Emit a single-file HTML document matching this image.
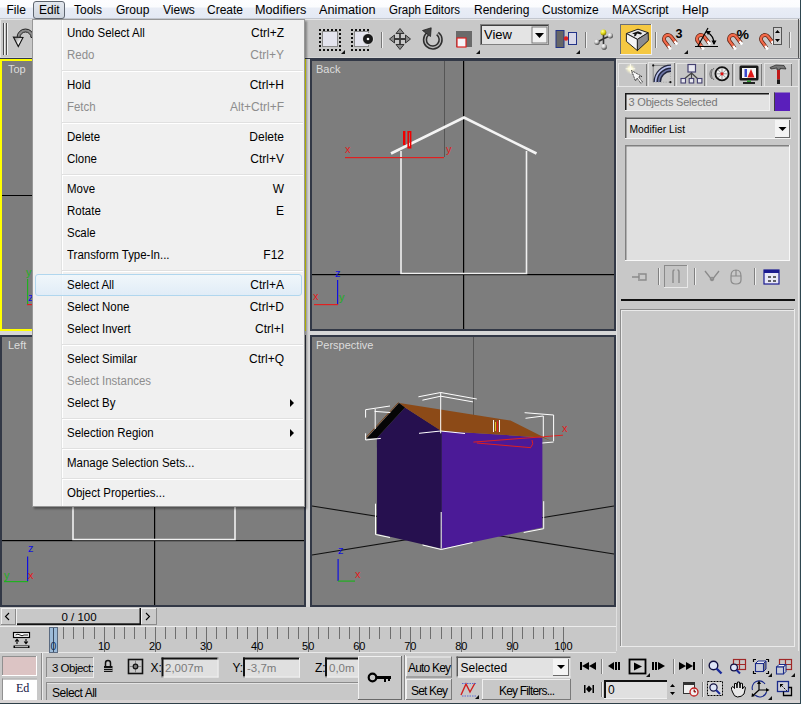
<!DOCTYPE html>
<html><head><meta charset="utf-8">
<style>
*{box-sizing:border-box}
html,body{margin:0;padding:0;width:801px;height:704px;overflow:hidden;background:#c8c8c8;font-family:"Liberation Sans",sans-serif;font-size:12px;color:#000}
.a{position:absolute}
#menubar{left:0;top:0;width:801px;height:19px;background:linear-gradient(#fdfdff 0,#fbfcfe 7px,#e9edf6 8px,#e4e9f4 18px);border-bottom:1px solid #c3c7cf}
.mi{position:absolute;top:3px;white-space:nowrap;color:#000;line-height:14px}
#toolbar{left:0;top:19px;width:801px;height:39px;background:#c8c8c8}
.vp{position:absolute;background:#7d7d7d;border:2px solid #303848;overflow:hidden}
.vlabel{position:absolute;color:#e6e6e6;font-size:11px;white-space:nowrap}
#cmd{left:616px;top:58px;width:185px;height:550px;background:#c8c8c8}
.menu{left:32px;top:19px;width:273px;height:488px;background:#f0f0f0;border:1px solid #979797;box-shadow:2px 2px 2px rgba(0,0,0,.35)}
.row{position:absolute;left:0;width:271px;height:22px}
.row .t{position:absolute;left:34px;top:4px;white-space:nowrap;transform:scaleX(.955);transform-origin:0 0}
.row .k{position:absolute;right:20px;top:4px;white-space:nowrap}
.row.dis{color:#8d8d8d}
.sep{position:absolute;left:29px;width:241px;height:2px;border-top:1px solid #e0e0e0;border-bottom:1px solid #fff}
svg{position:absolute;overflow:visible}
</style></head><body>

<!-- MENUBAR -->
<div id="menubar" class="a">
  <div class="a" style="left:33px;top:1px;width:32px;height:18px;border:1px solid #5f6670;border-radius:3px;background:linear-gradient(#e4e8ef,#cfd5de)"></div>
  <span class="mi" style="left:6.5px">File</span>
  <span class="mi" style="left:39px">Edit</span>
  <span class="mi" style="left:74px">Tools</span>
  <span class="mi" style="left:116px">Group</span>
  <span class="mi" style="left:163px">Views</span>
  <span class="mi" style="left:207px">Create</span>
  <span class="mi" style="left:255px;transform:scaleX(1.055);transform-origin:0 0">Modifiers</span>
  <span class="mi" style="left:319px;transform:scaleX(1.06);transform-origin:0 0">Animation</span>
  <span class="mi" style="left:388.5px;transform:scaleX(.96);transform-origin:0 0">Graph Editors</span>
  <span class="mi" style="left:474px">Rendering</span>
  <span class="mi" style="left:542px">Customize</span>
  <span class="mi" style="left:612px">MAXScript</span>
  <span class="mi" style="left:681.5px;transform:scaleX(1.08);transform-origin:0 0">Help</span>
</div>

<!-- TOOLBAR -->
<div id="toolbar" class="a">
<svg class="a" style="left:0;top:0" width="801" height="39" viewBox="0 19 801 39">
 <rect x="0" y="19" width="801" height="1" fill="#e6e6e6"/>
 <rect x="0" y="19" width="1" height="39" fill="#e6e6e6"/>
 <rect x="3" y="23" width="1" height="32" fill="#4a4a4a"/><rect x="4" y="23" width="1" height="32" fill="#f2f2f2"/>
 <rect x="6" y="23" width="1" height="32" fill="#4a4a4a"/><rect x="7" y="23" width="1" height="32" fill="#f2f2f2"/>
 <!-- undo -->
 <defs><linearGradient id="ug" x1="0" y1="0" x2="1" y2="1"><stop offset="0" stop-color="#777"/><stop offset=".6" stop-color="#f4f4f4"/><stop offset="1" stop-color="#999"/></linearGradient></defs>
 <path d="M17 37.5 A8.5 8.5 0 0 1 34 37.5 L31 37.5 A5.5 5.5 0 0 0 20 37.5Z" fill="#8a8a8a" stroke="#222" stroke-width="1"/>
 <path d="M13.4 37 L18.3 46.6 L23 37.5Z" fill="url(#ug)" stroke="#111" stroke-width="1.1"/>
 <!-- select region -->
 <g fill="#111">
  <rect x="319" y="29" width="2" height="2"/><rect x="323" y="29" width="2" height="2"/><rect x="327" y="29" width="2" height="2"/><rect x="331" y="29" width="2" height="2"/><rect x="335" y="29" width="2" height="2"/><rect x="339" y="29" width="2" height="2"/>
  <rect x="319" y="49" width="2" height="2"/><rect x="323" y="49" width="2" height="2"/><rect x="327" y="49" width="2" height="2"/><rect x="331" y="49" width="2" height="2"/><rect x="335" y="49" width="2" height="2"/><rect x="339" y="49" width="2" height="2"/>
  <rect x="319" y="33" width="2" height="2"/><rect x="319" y="37" width="2" height="2"/><rect x="319" y="41" width="2" height="2"/><rect x="319" y="45" width="2" height="2"/>
  <rect x="339" y="33" width="2" height="2"/><rect x="339" y="37" width="2" height="2"/><rect x="339" y="41" width="2" height="2"/><rect x="339" y="45" width="2" height="2"/>
 </g>
 <rect x="322.5" y="31.5" width="15" height="15" fill="#e4e4ee" stroke="#8a8a8a"/>
 <path d="M345 50 L345 54 L341 54Z" fill="#111"/>
 <g fill="#111">
  <rect x="351" y="29" width="2" height="2"/><rect x="355" y="29" width="2" height="2"/><rect x="359" y="29" width="2" height="2"/><rect x="363" y="29" width="2" height="2"/><rect x="367" y="29" width="2" height="2"/>
  <rect x="351" y="49" width="2" height="2"/><rect x="355" y="49" width="2" height="2"/><rect x="359" y="49" width="2" height="2"/><rect x="363" y="49" width="2" height="2"/><rect x="367" y="49" width="2" height="2"/>
  <rect x="351" y="33" width="2" height="2"/><rect x="351" y="37" width="2" height="2"/><rect x="351" y="41" width="2" height="2"/><rect x="351" y="45" width="2" height="2"/>
 </g>
 <rect x="354.5" y="31.5" width="14" height="15" fill="#e4e4ee" stroke="#8a8a8a"/>
 <circle cx="368" cy="39" r="5.5" fill="#1a1a1a" stroke="#fff" stroke-width="0.8"/>
 <circle cx="368" cy="39" r="1.3" fill="#fff"/>
 <rect x="381" y="32" width="1" height="16" fill="#777"/><rect x="382" y="32" width="1" height="16" fill="#f0f0f0"/>
 <!-- move -->
 <path d="M400 31 L400 47 M392 39 L408 39" stroke="#3a3a3a" stroke-width="1.8"/>
 <g fill="#8a8a8a" stroke="#333" stroke-width="1">
  <path d="M400 28.5 L404 33.5 L396 33.5Z"/><path d="M400 49.5 L404 44.5 L396 44.5Z"/>
  <path d="M389.5 39 L394.5 35 L394.5 43Z"/><path d="M410.5 39 L405.5 35 L405.5 43Z"/>
 </g>
 <!-- rotate -->
 <path d="M427.5 34 A7.8 7.8 0 1 0 437.5 33.5" fill="none" stroke="#2e2e2e" stroke-width="4.4"/>
 <path d="M427.5 34 A7.8 7.8 0 1 0 437.5 33.5" fill="none" stroke="#b8b8b8" stroke-width="1.4"/>
 <path d="M422.5 30.5 L431.2 27.8 L430.5 36.5Z" fill="#444" stroke="#222" stroke-width=".8"/>
 <!-- scale -->
 <rect x="456" y="31" width="16" height="16" fill="#6a6a6a"/>
 <rect x="457" y="38" width="9" height="9" fill="#f4f4f8" stroke="#e02020" stroke-width="1.2"/>
 <path d="M480 50 L480 54 L476 54Z" fill="#111"/>
 <!-- view dropdown -->
 <rect x="480.5" y="24.5" width="68" height="20" fill="#e4e4e4" stroke="#808080"/>
 <rect x="481" y="25" width="67" height="1" fill="#404040"/><rect x="481" y="25" width="1" height="19" fill="#404040"/>
 <rect x="532" y="27" width="15" height="16" fill="#f2f2f2" stroke="#7a7a7a" stroke-width="1"/>
 <path d="M535 33 L544 33 L539.5 38Z" fill="#000"/>
 <text x="484" y="39" font-family="Liberation Sans" font-size="13" fill="#000">View</text>
  <!-- mirror -->
 <rect x="556" y="30.5" width="8" height="17" fill="#666" stroke="#223388"/>
 <rect x="568.5" y="32.5" width="8" height="12" fill="#d8d8e8" stroke="#223388"/>
 <circle cx="566" cy="38.5" r="2.2" fill="#e02020"/>
 <path d="M580 50 L580 54 L576 54Z" fill="#111"/>
 <rect x="585" y="32" width="1" height="16" fill="#777"/><rect x="586" y="32" width="1" height="16" fill="#f0f0f0"/>
 <!-- pivot -->
 <defs>
  <radialGradient id="sph" cx=".35" cy=".3" r=".75"><stop offset="0" stop-color="#fff"/><stop offset=".45" stop-color="#c8c8c8"/><stop offset="1" stop-color="#3a3a3a"/></radialGradient>
  <radialGradient id="sphy" cx=".35" cy=".3" r=".75"><stop offset="0" stop-color="#ffffa0"/><stop offset=".5" stop-color="#e8e020"/><stop offset="1" stop-color="#807800"/></radialGradient>
 </defs>
 <path d="M603.5 33 L603.5 44 M597 42.2 L603.5 38.7 L610.3 35.8" fill="none" stroke="#333" stroke-width="1.6"/>
 <circle cx="603.4" cy="32.4" r="2.9" fill="url(#sphy)"/>
 <circle cx="610.3" cy="35.8" r="2.7" fill="url(#sph)"/>
 <circle cx="597" cy="42.2" r="2.7" fill="url(#sph)"/>
 <circle cx="604.1" cy="46.9" r="2.8" fill="url(#sph)"/>
 <!-- yellow button -->
 <rect x="620" y="24" width="32" height="31" fill="#f5c842"/>
 <rect x="620" y="24" width="32" height="1" fill="#6a6e78"/><rect x="620" y="24" width="1" height="31" fill="#6a6e78"/>
 <rect x="651" y="24" width="1" height="31" fill="#f0f0f0"/><rect x="620" y="54" width="32" height="1" fill="#f0f0f0"/>
 <path d="M626.4 33.5 L638 29.2 L648.2 32.7 L637.4 39.4Z" fill="#e8e8ea" stroke="#222" stroke-width="1"/>
 <path d="M626.4 33.5 L637.4 39.4 L637.4 50.6 L626.4 41.4Z" fill="#f4f4f6" stroke="#222" stroke-width="1"/>
 <path d="M637.4 39.4 L648.2 32.7 L648.4 40.4 L637.4 50.6Z" fill="#8c8c90" stroke="#222" stroke-width="1"/>
 <path d="M632 33.5 L638 31.2 L642 33 L641 34.5 L637 33.5 L636 35.8 L634 36.5 L634.5 34.2Z" fill="#111"/>
 <rect x="655" y="32" width="1" height="16" fill="#777"/><rect x="656" y="32" width="1" height="16" fill="#f0f0f0"/>
 <!-- magnets -->
 <g id="mag">
  <path d="M669.6 47.8 L664.8 41.4 A4 4 0 0 1 671.2 36.6 L676 43" fill="none" stroke="#5a2010" stroke-width="3.8"/>
  <path d="M669.6 47.8 L664.8 41.4 A4 4 0 0 1 671.2 36.6 L676 43" fill="none" stroke="#f26a4a" stroke-width="2.4"/>
  <path d="M668.2 46 L670.8 49.4 M674.6 41.2 L677.2 44.6" stroke="#fff" stroke-width="2.4"/>
 </g>
 <text x="675.5" y="37.5" font-family="Liberation Sans" font-weight="bold" font-size="12.5" fill="#000">3</text>
 <path d="M688 50 L688 54 L684 54Z" fill="#111"/>
 <use href="#mag" x="33"/>
 <path d="M695 46.5 L718 46.5 M698 46 L708 28 M706.5 32 A13 13 0 0 1 714 44" fill="none" stroke="#000" stroke-width="1.2"/>
 <path d="M711 31 L706 31 L708 35Z M714 45 L711.5 40.5 L716.5 40.5Z" fill="#000"/>
 <use href="#mag" x="65"/>
 <text x="736.5" y="38.5" font-family="Liberation Sans" font-weight="bold" font-size="13.5" fill="#000" textLength="12.5" lengthAdjust="spacingAndGlyphs">%</text>
 <use href="#mag" x="97"/>
 <rect x="773.5" y="27.5" width="8" height="17" fill="#d0d0d0" stroke="#555"/>
 <path d="M775 33 L780 33 L777.5 30Z M775 39 L780 39 L777.5 42Z" fill="#000"/>
 <rect x="789" y="32" width="1" height="16" fill="#777"/><rect x="790" y="32" width="1" height="16" fill="#f0f0f0"/>
 <rect x="0" y="57" width="801" height="1" fill="#d4d4d4"/>
 <rect x="798" y="19" width="1" height="39" fill="#555"/>
</svg>
</div>

<!-- VIEWPORTS -->
<svg class="a" style="left:0;top:58px" width="616" height="550" viewBox="0 58 616 550">
 <rect x="0" y="58" width="616" height="550" fill="#c8c8c8"/>
 <rect x="0" y="58" width="616" height="1" fill="#323846"/>
 <rect x="306" y="59" width="4" height="548" fill="#d6d6d6"/>
 <rect x="0" y="331" width="616" height="4" fill="#d6d6d6"/>
 <!-- Top -->
 <rect x="0" y="59" width="306" height="272" fill="#ffff00"/>
 <rect x="2" y="61" width="302" height="268" fill="#7d7d7d"/>
 <rect x="2" y="195" width="302" height="1" fill="#000"/>
 <text x="8" y="73" font-family="Liberation Sans" font-size="11" fill="#dcdcdc">Top</text>
 <rect x="27" y="279" width="1.2" height="25" fill="#20b020"/>
 <rect x="27" y="304" width="8" height="1.2" fill="#e02020"/>
 <text x="26" y="276" font-family="Liberation Sans" font-size="11" fill="#20b020">y</text>
 <text x="28" y="301" font-family="Liberation Sans" font-size="11" fill="#1010e0">z</text>
 <!-- Back -->
 <rect x="310" y="59" width="306" height="272" fill="#323846"/>
 <rect x="312" y="61" width="302" height="268" fill="#7d7d7d"/>
 <text x="316" y="73" font-family="Liberation Sans" font-size="11" fill="#dcdcdc">Back</text>
 <rect x="463" y="61" width="1.2" height="268" fill="#000"/>
 <rect x="312" y="274" width="302" height="1.2" fill="#000"/>
 <rect x="444" y="61" width="1" height="96" fill="#555"/>
 <path d="M401 151 L401 273.5 L526.5 273.5 L526.5 151" fill="none" stroke="#f0f0f0" stroke-width="1.6"/>
 <path d="M391 153.5 L464 117.5 L536.5 153.5" fill="none" stroke="#f4f4f4" stroke-width="2.6"/>
 <rect x="403" y="131" width="2.4" height="14" fill="#f00000"/><path d="M408.2 131.8 L410.6 131.8 L410.6 147.6 L408.2 147.6Z" fill="none" stroke="#f00000" stroke-width="1.6"/>
 <rect x="345" y="157" width="99" height="1.2" fill="#e02020"/>
 <text x="345" y="153" font-family="Liberation Sans" font-size="11" fill="#e02020">x</text>
 <text x="446" y="153" font-family="Liberation Sans" font-size="11" fill="#e02020">y</text>
 
 <rect x="337" y="280" width="1.2" height="24.5" fill="#1010e0"/>
 <rect x="314" y="304" width="24" height="1.2" fill="#e02020"/>
 <text x="335" y="277" font-family="Liberation Sans" font-size="11" fill="#1010e0">z</text>
 <text x="313" y="300" font-family="Liberation Sans" font-size="11" fill="#e02020">x</text>
 <text x="339" y="301" font-family="Liberation Sans" font-size="11" fill="#20b020">y</text>
 <!-- Left -->
 <rect x="0" y="335" width="306" height="272" fill="#323846"/>
 <rect x="2" y="337" width="302" height="268" fill="#7d7d7d"/>
 <text x="8" y="349" font-family="Liberation Sans" font-size="11" fill="#dcdcdc">Left</text>
 <rect x="154" y="337" width="1.2" height="268" fill="#000"/>
 <rect x="2" y="540" width="302" height="1.2" fill="#000"/>
 <path d="M73 400 L73 539.5 L235 539.5 L235 400" fill="none" stroke="#f0f0f0" stroke-width="1.6"/>
 <rect x="27" y="556.5" width="1.2" height="25" fill="#1010e0"/>
 <rect x="4" y="581" width="24" height="1.2" fill="#20b020"/>
 <text x="28" y="552" font-family="Liberation Sans" font-size="11" fill="#1010e0">z</text>
 <text x="4" y="579" font-family="Liberation Sans" font-size="11" fill="#20b020">y</text>
 <text x="28" y="579" font-family="Liberation Sans" font-size="11" fill="#e02020">x</text>
 <!-- Perspective -->
 <rect x="310" y="335" width="306" height="272" fill="#323846"/>
 <rect x="312" y="337" width="302" height="268" fill="#7d7d7d"/>
 <text x="316" y="349" font-family="Liberation Sans" font-size="11" fill="#dcdcdc">Perspective</text>
 <path d="M312 506 L614 554 M312 555 L614 506" stroke="#111" stroke-width="1.1"/>
 <rect x="473" y="337" width="1" height="105" fill="#555"/>
 <path d="M376.9 438 L405 407.5 L441.9 431 L441.9 548.7 L377 533.7Z" fill="#26104f"/>
 <path d="M441.9 431 L542.4 437.4 L542.3 527.5 L441.9 548.7Z" fill="#4b1a97"/>
 <path d="M399.3 403 L510.5 420.6 L551.7 441.2 L542.4 437.4 L441.2 431 L405 407.5Z" fill="#8c4a17"/>
 <path d="M366.5 438.6 L399 403 L405 407.5 L376.9 438Z" fill="#050505"/>
 <path d="M366 437.5 L398.5 402.5" stroke="#7a4216" stroke-width="1"/>
 <path d="M473.4 442.1 L563 435.2 M476.8 443 L531.1 447.7 M532 440 Q534 444 531 447" fill="none" stroke="#e02020" stroke-width="1"/>
 <text x="562" y="431.5" font-family="Liberation Sans" font-size="11" fill="#e02020">x</text>
 <path d="M493.5 420 L493.5 432 M499.5 420 L499.5 432" stroke="#f4f4f4" stroke-width="1"/>
 <path d="M495.5 422 L495.5 431" stroke="#e0c020" stroke-width="1"/><path d="M497.5 421 L497.5 432" stroke="#e02020" stroke-width="1"/>
 <g fill="none" stroke="#fff" stroke-width="1">
  <path d="M365.6 417.6 L365.6 409.7 L390 406 M374.6 411.4 L390.3 412.5 M375.2 409 L375.2 429 M365.6 433.3 L365.6 440 L380.8 438.4"/>
  <path d="M418.4 396.8 L440.7 392.5 L476.8 399 M422.4 400.2 L440.7 396.2 L473 401.9 M440.7 392.3 L440.7 433.3 M419 433.3 L440.7 431 L465 433.5"/>
  <path d="M524.6 412.7 L553.6 415 L553.6 441.2 M525.5 418.3 L543.3 416 L543.3 436.5 M542.4 443 L553.6 442"/>
  <path d="M375.5 503.7 L375.5 534.5 L390 537.5 M441.2 512 L441.2 548.7 M422.5 545 L441.2 549.5 L472.5 542.5 M543.7 501.2 L543.7 528.7 L523.7 532.5"/>
 </g>
 <rect x="337.5" y="559" width="1.2" height="22" fill="#1010e0"/>
 <rect x="338" y="580.5" width="17" height="1.2" fill="#20b020"/>
 <text x="338" y="554" font-family="Liberation Sans" font-size="11" fill="#1010e0">z</text>
 <text x="355" y="578" font-family="Liberation Sans" font-size="11" fill="#e02020">x</text>
</svg>

<!-- COMMAND PANEL -->
<svg class="a" style="left:616px;top:58px" width="185" height="594" viewBox="616 58 185 594">
 <rect x="616" y="58" width="185" height="594" fill="#c8c8c8"/>
 <rect x="616" y="58" width="185" height="1" fill="#7c7e84"/>
 <rect x="616" y="59" width="185" height="1" fill="#e0e0e0"/>
 <rect x="616" y="59" width="1" height="593" fill="#e0e0e0"/>
 <rect x="798" y="59" width="1" height="592" fill="#e6e6e6"/>
 
 <rect x="618" y="63" width="29" height="23" fill="#c6c6c6"/><rect x="618" y="63" width="29" height="1" fill="#e4e4e4"/><rect x="618" y="63" width="1" height="23" fill="#e4e4e4"/><rect x="646" y="64" width="1" height="22" fill="#7a7a7a"/>
<rect x="648" y="62" width="27" height="24" fill="#cacaca"/><rect x="648" y="62" width="27" height="1" fill="#e4e4e4"/><rect x="648" y="62" width="1" height="24" fill="#e4e4e4"/><rect x="674" y="63" width="1" height="23" fill="#7a7a7a"/>
<rect x="676" y="63" width="29" height="23" fill="#c6c6c6"/><rect x="676" y="63" width="29" height="1" fill="#e4e4e4"/><rect x="676" y="63" width="1" height="23" fill="#e4e4e4"/><rect x="704" y="64" width="1" height="22" fill="#7a7a7a"/>
<rect x="706" y="63" width="27" height="23" fill="#c6c6c6"/><rect x="706" y="63" width="27" height="1" fill="#e4e4e4"/><rect x="706" y="63" width="1" height="23" fill="#e4e4e4"/><rect x="732" y="64" width="1" height="22" fill="#7a7a7a"/>
<rect x="734" y="63" width="28" height="23" fill="#c6c6c6"/><rect x="734" y="63" width="28" height="1" fill="#e4e4e4"/><rect x="734" y="63" width="1" height="23" fill="#e4e4e4"/><rect x="761" y="64" width="1" height="22" fill="#7a7a7a"/>
<rect x="764" y="63" width="28" height="23" fill="#c6c6c6"/><rect x="764" y="63" width="28" height="1" fill="#e4e4e4"/><rect x="764" y="63" width="1" height="23" fill="#e4e4e4"/><rect x="791" y="64" width="1" height="22" fill="#7a7a7a"/>

 <rect x="616" y="86" width="183" height="1" fill="#e6e6e6"/>
 <!-- tab icons -->
 <defs><radialGradient id="glow"><stop offset="0" stop-color="#ffffff"/><stop offset=".35" stop-color="#fbf8d0"/><stop offset="1" stop-color="#c8c8c8" stop-opacity="0"/></radialGradient></defs>
 <circle cx="630.4" cy="68.8" r="6" fill="url(#glow)"/>
 <path d="M630.4 64 L630.4 73.5 M625.6 68.8 L635.2 68.8" stroke="#fffef0" stroke-width=".9"/>
 <path d="M631.5 70.5 L635.5 81 L637 78 L641 83.5 L642.5 82 L638.5 76.8 L642 76.5Z" fill="#f8f8f8" stroke="#333" stroke-width="1" stroke-dasharray="1.2 .6"/>
 <path d="M653.2 82.2 L653.2 65.4 L670.4 65.4" fill="none" stroke="#6a6a6a" stroke-width=".7"/>
 <path d="M653.2 82.2 L670.4 82.2 L670.4 65.4" fill="none" stroke="#8a8a8a" stroke-width=".6" stroke-dasharray="1 1.5"/>
 <circle cx="653.2" cy="65.4" r="1.1" fill="#111"/><circle cx="670.4" cy="82.2" r="1.1" fill="#111"/>
 <path d="M657.25 82 A13.75 13.75 0 0 1 671 68.25" fill="none" stroke="#23273f" stroke-width="7.5"/>
 <path d="M655.6 82 A15.4 15.4 0 0 1 671 66.6" fill="none" stroke="#b8c0ec" stroke-width="1.6"/>
 <path d="M658.8 82 A12.2 12.2 0 0 1 671 69.8" fill="none" stroke="#6f78a8" stroke-width="1.6"/>
 <path d="M691.5 72 L691.5 80 M691.5 73 L683 80 M691.5 73 L699 80" stroke="#444" stroke-width="1.2"/>
 <rect x="688" y="64.5" width="7.5" height="7.5" fill="#e8e8f0" stroke="#444070" stroke-width="1.2"/>
 <rect x="681" y="78.5" width="4.5" height="4.5" fill="#e8e8f0" stroke="#444070" stroke-width="1.1"/>
 <rect x="689.2" y="78.5" width="4.5" height="4.5" fill="#e8e8f0" stroke="#444070" stroke-width="1.1"/>
 <rect x="697.4" y="78.5" width="4.5" height="4.5" fill="#e8e8f0" stroke="#444070" stroke-width="1.1"/>
 <path d="M714 68 A8 8 0 0 0 714 80 M712 69 A7 7 0 0 0 712 79" fill="none" stroke="#555" stroke-width=".8"/>
 <circle cx="722" cy="73.8" r="6.6" fill="#eeeeee" stroke="#111" stroke-width="1.8"/>
 <path d="M722 68 L722 79.5 M716.3 73.8 L727.7 73.8 M718 69.8 L726 77.8 M726 69.8 L718 77.8" stroke="#888" stroke-width=".8"/>
 <circle cx="722" cy="73.8" r="1.6" fill="#e01010"/>
 <rect x="739.5" y="65.5" width="19" height="15" fill="#1a1a1a" rx="1.5"/>
 <rect x="742" y="68" width="14" height="10" fill="#f4f4f4"/>
 <rect x="744.5" y="69" width="2.5" height="8" fill="#3a4ad0"/>
 <path d="M747.5 77.5 L751 69 L754.5 77.5Z" fill="#e01818"/>
 <rect x="747" y="80.5" width="4" height="2" fill="#30a030"/>
 <rect x="743" y="82" width="12" height="2" fill="#222"/>
 <path d="M770 67.5 L776 65 L784 65.5 L786 69 L780 68.5 L780 70 L777 70 L777 68 L771 69Z" fill="#777" stroke="#222" stroke-width=".7"/>
 <rect x="777" y="70" width="3" height="9.5" fill="#c01818"/>
 <rect x="777" y="79.5" width="3" height="4.5" fill="#1a1a1a"/>
 <!-- object name field -->
 <rect x="625" y="93" width="145" height="18" fill="#e2e2e2"/>
 <rect x="625" y="93" width="145" height="1.5" fill="#1a1a1a"/><rect x="625" y="93" width="1.5" height="18" fill="#1a1a1a"/>
 <rect x="625" y="110" width="145" height="1" fill="#f0f0f0"/><rect x="769" y="93" width="1" height="18" fill="#f0f0f0"/>
 <text x="628.5" y="106" font-family="Liberation Sans" font-size="11" fill="#777" textLength="89" lengthAdjust="spacing">3 Objects Selected</text>
 <rect x="774" y="92.5" width="16" height="18.5" fill="#5a1fbb"/>
 <rect x="774" y="92.5" width="1" height="18.5" fill="#404040"/>
 <!-- modifier list -->
 <rect x="625" y="117.5" width="166" height="21" fill="#e0e0e0"/>
 <rect x="625" y="117.5" width="166" height="1.5" fill="#5a5a5a"/><rect x="625" y="117.5" width="1.5" height="21" fill="#5a5a5a"/>
 <rect x="625" y="138" width="166" height="1" fill="#f4f4f4"/>
 <rect x="775" y="120" width="15" height="18" fill="#f4f4f4"/>
 <rect x="789" y="120" width="1" height="18" fill="#6a6a6a"/><rect x="775" y="137" width="15" height="1" fill="#6a6a6a"/>
 <path d="M778.5 127 L786.5 127 L782.5 131Z" fill="#000"/>
 <text x="629.5" y="132.7" font-family="Liberation Sans" font-size="11" fill="#000" textLength="55.5" lengthAdjust="spacingAndGlyphs">Modifier List</text>
 <!-- stack list -->
 <rect x="625" y="145" width="165" height="116" fill="#e0e0e0"/>
 <rect x="625" y="145" width="165" height="1.5" fill="#808080"/><rect x="625" y="145" width="1.5" height="116" fill="#808080"/>
 <rect x="625" y="260" width="165" height="1" fill="#f8f8f8"/><rect x="789" y="145" width="1" height="116" fill="#f8f8f8"/>
 <!-- stack icons -->
 <path d="M632 277 L639 277 M639 273 L639 281 M640 274 L646 274 L646 280 L640 280" fill="none" stroke="#8a8a8a" stroke-width="1.4"/>
 <rect x="658" y="268" width="1" height="17" fill="#808080"/><rect x="659" y="268" width="1" height="17" fill="#eeeeee"/>
 <rect x="664" y="265" width="24" height="23" fill="#c4c4c4"/>
 <rect x="664" y="265" width="24" height="1" fill="#8a8a8a"/><rect x="664" y="265" width="1" height="23" fill="#8a8a8a"/>
 <rect x="664" y="287" width="24" height="1" fill="#e8e8e8"/><rect x="687" y="265" width="1" height="23" fill="#e8e8e8"/>
 <path d="M673 283 L673 272 Q673 270 674.5 270 M679 283 L679 272 Q679 270 677.5 270" fill="none" stroke="#8a8a8a" stroke-width="1.4"/>
 <rect x="694" y="268" width="1" height="17" fill="#808080"/><rect x="695" y="268" width="1" height="17" fill="#eeeeee"/>
 <path d="M705 271 L712 280 L719 271" fill="none" stroke="#8a8a8a" stroke-width="1.3"/>
 <circle cx="712" cy="279" r="1.8" fill="none" stroke="#8a8a8a"/>
 <path d="M731 276 Q731 270 736 270 Q741 270 741 276 L741 280 Q741 284 736 284 Q731 284 731 280Z M731 276 L741 276 M736 270 L736 276" fill="none" stroke="#8a8a8a" stroke-width="1.2"/>
 <rect x="754" y="268" width="1" height="17" fill="#808080"/><rect x="755" y="268" width="1" height="17" fill="#eeeeee"/>
 <rect x="764" y="270" width="15" height="14" fill="#e8e8f8" stroke="#1a1a90" stroke-width="1.2"/>
 <rect x="764" y="270" width="15" height="3" fill="#1a1a90"/>
 <path d="M768 277 L771 277 M773 277 L776 277 M768 281 L771 281 M773 281 L776 281" stroke="#333" stroke-width="1.4"/>
 <rect x="621" y="299" width="174" height="2" fill="#111"/>
 <!-- rollout area -->
 <rect x="620" y="309" width="175" height="337" fill="#c8c8c8"/>
 <rect x="620" y="309" width="175" height="1" fill="#8c8c8c"/><rect x="620" y="309" width="1" height="337" fill="#8c8c8c"/>
 <rect x="621" y="310" width="173" height="1" fill="#eaeaea"/><rect x="621" y="310" width="1" height="336" fill="#eaeaea"/>
 <rect x="794" y="309" width="1" height="337" fill="#eaeaea"/>
 <rect x="620" y="646" width="175" height="1" fill="#eaeaea"/>
 <rect x="617" y="652" width="184" height="1" fill="#767676"/>
</svg>

<!-- BOTTOM -->
<svg class="a" style="left:0;top:607px" width="801" height="97" viewBox="0 607 801 97">
 <rect x="0" y="607" width="616" height="97" fill="#c8c8c8"/>
 <rect x="616" y="651" width="185" height="53" fill="#c8c8c8"/>
 <!-- time slider -->
 
 <rect x="1" y="608" width="15" height="17" fill="#cacaca"/>
 <rect x="1" y="608" width="15" height="1" fill="#f0f0f0"/><rect x="1" y="608" width="1" height="17" fill="#f0f0f0"/>
 <rect x="15" y="609" width="1" height="16" fill="#8a8a8a"/><rect x="1" y="624" width="15" height="1" fill="#8a8a8a"/>
 <path d="M9 613 L5.5 616.5 L9 620" fill="none" stroke="#000" stroke-width="1.1"/>
 <rect x="16" y="608" width="125" height="17" fill="#c8c8c8"/>
 <rect x="16" y="608" width="125" height="1" fill="#f0f0f0"/><rect x="16" y="608" width="1" height="17" fill="#f0f0f0"/>
 <rect x="139.5" y="608" width="1.8" height="17" fill="#111"/><rect x="17" y="623.3" width="124" height="1.8" fill="#111"/>
 <text x="79" y="621" text-anchor="middle" font-family="Liberation Sans" font-size="11.5" fill="#000">0 / 100</text>
 <rect x="141" y="608" width="15" height="17" fill="#cacaca"/>
 <rect x="141" y="608" width="15" height="1" fill="#f0f0f0"/><rect x="141" y="608" width="1" height="17" fill="#f0f0f0"/>
 <rect x="156" y="608" width="1" height="17" fill="#8a8a8a"/><rect x="141" y="624" width="15" height="1" fill="#8a8a8a"/>
 <path d="M146 613 L149.5 616.5 L146 620" fill="none" stroke="#000" stroke-width="1.1"/>
 <!-- track bar -->
 <rect x="0" y="626" width="616" height="1" fill="#ececec"/>
 <rect x="0" y="652" width="616" height="1" fill="#e8e8e8"/>
 <rect x="13.5" y="632.5" width="16" height="5" fill="#fff" stroke="#000" stroke-width="1.2"/>
 <path d="M15.5 635 Q18 633.5 20 635 Q22 636.5 24 635 L28 635" fill="none" stroke="#000" stroke-width=".9"/>
 <path d="M17 644 L17 639.5 M15.2 641.5 L17 639.3 L18.8 641.5 M26 639 L26 643.5 M24.2 641.5 L26 643.7 L27.8 641.5" fill="none" stroke="#000" stroke-width="1.1"/>
 <rect x="13.5" y="645.5" width="16" height="2.5" fill="#000"/>
 <rect x="15" y="646.3" width="13" height=".9" fill="#fff"/>
 <rect x="53" y="627" width="1" height="25" fill="#6e6e6e"/><rect x="63" y="627" width="1" height="12" fill="#6e6e6e"/><rect x="73" y="627" width="1" height="12" fill="#6e6e6e"/><rect x="83" y="627" width="1" height="12" fill="#6e6e6e"/><rect x="94" y="627" width="1" height="12" fill="#6e6e6e"/><rect x="104" y="627" width="1" height="25" fill="#6e6e6e"/><rect x="114" y="627" width="1" height="12" fill="#6e6e6e"/><rect x="124" y="627" width="1" height="12" fill="#6e6e6e"/><rect x="134" y="627" width="1" height="12" fill="#6e6e6e"/><rect x="145" y="627" width="1" height="12" fill="#6e6e6e"/><rect x="155" y="627" width="1" height="25" fill="#6e6e6e"/><rect x="165" y="627" width="1" height="12" fill="#6e6e6e"/><rect x="175" y="627" width="1" height="12" fill="#6e6e6e"/><rect x="186" y="627" width="1" height="12" fill="#6e6e6e"/><rect x="196" y="627" width="1" height="12" fill="#6e6e6e"/><rect x="206" y="627" width="1" height="25" fill="#6e6e6e"/><rect x="216" y="627" width="1" height="12" fill="#6e6e6e"/><rect x="226" y="627" width="1" height="12" fill="#6e6e6e"/><rect x="237" y="627" width="1" height="12" fill="#6e6e6e"/><rect x="247" y="627" width="1" height="12" fill="#6e6e6e"/><rect x="257" y="627" width="1" height="25" fill="#6e6e6e"/><rect x="267" y="627" width="1" height="12" fill="#6e6e6e"/><rect x="277" y="627" width="1" height="12" fill="#6e6e6e"/><rect x="288" y="627" width="1" height="12" fill="#6e6e6e"/><rect x="298" y="627" width="1" height="12" fill="#6e6e6e"/><rect x="308" y="627" width="1" height="25" fill="#6e6e6e"/><rect x="318" y="627" width="1" height="12" fill="#6e6e6e"/><rect x="328" y="627" width="1" height="12" fill="#6e6e6e"/><rect x="339" y="627" width="1" height="12" fill="#6e6e6e"/><rect x="349" y="627" width="1" height="12" fill="#6e6e6e"/><rect x="359" y="627" width="1" height="25" fill="#6e6e6e"/><rect x="369" y="627" width="1" height="12" fill="#6e6e6e"/><rect x="379" y="627" width="1" height="12" fill="#6e6e6e"/><rect x="390" y="627" width="1" height="12" fill="#6e6e6e"/><rect x="400" y="627" width="1" height="12" fill="#6e6e6e"/><rect x="410" y="627" width="1" height="25" fill="#6e6e6e"/><rect x="420" y="627" width="1" height="12" fill="#6e6e6e"/><rect x="430" y="627" width="1" height="12" fill="#6e6e6e"/><rect x="441" y="627" width="1" height="12" fill="#6e6e6e"/><rect x="451" y="627" width="1" height="12" fill="#6e6e6e"/><rect x="461" y="627" width="1" height="25" fill="#6e6e6e"/><rect x="471" y="627" width="1" height="12" fill="#6e6e6e"/><rect x="482" y="627" width="1" height="12" fill="#6e6e6e"/><rect x="492" y="627" width="1" height="12" fill="#6e6e6e"/><rect x="502" y="627" width="1" height="12" fill="#6e6e6e"/><rect x="512" y="627" width="1" height="25" fill="#6e6e6e"/><rect x="522" y="627" width="1" height="12" fill="#6e6e6e"/><rect x="533" y="627" width="1" height="12" fill="#6e6e6e"/><rect x="543" y="627" width="1" height="12" fill="#6e6e6e"/><rect x="553" y="627" width="1" height="12" fill="#6e6e6e"/><rect x="563" y="627" width="1" height="25" fill="#6e6e6e"/><text x="104.1" y="650" text-anchor="middle" font-family="Liberation Sans" font-size="11" fill="#000">10</text><text x="155.2" y="650" text-anchor="middle" font-family="Liberation Sans" font-size="11" fill="#000">20</text><text x="206.2" y="650" text-anchor="middle" font-family="Liberation Sans" font-size="11" fill="#000">30</text><text x="257.2" y="650" text-anchor="middle" font-family="Liberation Sans" font-size="11" fill="#000">40</text><text x="308.2" y="650" text-anchor="middle" font-family="Liberation Sans" font-size="11" fill="#000">50</text><text x="359.3" y="650" text-anchor="middle" font-family="Liberation Sans" font-size="11" fill="#000">60</text><text x="410.3" y="650" text-anchor="middle" font-family="Liberation Sans" font-size="11" fill="#000">70</text><text x="461.3" y="650" text-anchor="middle" font-family="Liberation Sans" font-size="11" fill="#000">80</text><text x="512.4" y="650" text-anchor="middle" font-family="Liberation Sans" font-size="11" fill="#000">90</text><text x="563.4" y="650" text-anchor="middle" font-family="Liberation Sans" font-size="11" fill="#000">100</text>
 <rect x="49.5" y="627.5" width="8" height="25" fill="#9dbbd8" stroke="#5a6a80" stroke-width="1"/>
 <rect x="53" y="628" width="1" height="24" fill="#3a4a60"/>
 <text x="53.5" y="650" text-anchor="middle" font-family="Liberation Sans" font-size="10.5" fill="#10305a">0</text>
 <!-- status: swatches -->
 <rect x="2" y="656" width="35" height="20" fill="#dcc4c4"/>
 <rect x="2" y="656" width="35" height="1" fill="#909090"/><rect x="2" y="656" width="1" height="20" fill="#909090"/>
 <rect x="2" y="675" width="35" height="1" fill="#fff"/><rect x="36" y="656" width="1" height="20" fill="#fff"/>
 <rect x="2" y="678.5" width="35" height="21.5" fill="#fff"/>
 <rect x="2" y="678.5" width="35" height="1" fill="#909090"/><rect x="2" y="678.5" width="1" height="21.5" fill="#909090"/>
 <text x="16" y="692" font-family="Liberation Serif" font-size="12" fill="#101040">Ed</text>
 <rect x="41" y="653" width="1" height="49" fill="#8a8a8a"/><rect x="42" y="653" width="1" height="49" fill="#ececec"/>
 <!-- 3 object box -->
 <rect x="46" y="657" width="48" height="1" fill="#8a8a8a"/><rect x="46" y="657" width="1" height="21" fill="#8a8a8a"/>
 <rect x="46" y="677" width="48" height="1" fill="#ececec"/><rect x="93" y="657" width="1" height="21" fill="#ececec"/>
 <text x="52" y="672" font-family="Liberation Sans" font-size="11.5" fill="#000" textLength="42">3 Object:</text>
 <!-- lock -->
 <path d="M105.5 666 L105.5 663 Q105.5 660.5 108 660.5 Q110.5 660.5 110.5 663 L110.5 666" fill="none" stroke="#111" stroke-width="1.5"/>
 <rect x="104" y="666" width="8.5" height="6" fill="#111"/>
 <rect x="104" y="668" width="8.5" height=".8" fill="#c8c8c8"/><rect x="104" y="670" width="8.5" height=".8" fill="#c8c8c8"/>
 <!-- bullseye -->
 <rect x="128.5" y="659.5" width="14" height="14" fill="#cacaca" stroke="#111" stroke-width="1.6"/>
 <path d="M129.5 666.5 L141.5 666.5 M135.5 660.5 L135.5 672.5" stroke="#777" stroke-width=".8"/>
 <circle cx="135.5" cy="666.5" r="2.3" fill="#777" stroke="#111" stroke-width="1.2"/>
 <!-- coords -->
 <text x="150.5" y="672" font-family="Liberation Sans" font-size="12" fill="#000">X:</text>
 <rect x="161.5" y="657.5" width="57" height="20" fill="#e0e0e0"/>
 <rect x="161.5" y="657.5" width="57" height="2" fill="#111"/><rect x="161.5" y="657.5" width="2" height="20" fill="#111"/>
 <rect x="161.5" y="676.5" width="57" height="1" fill="#f0f0f0"/><rect x="217.5" y="657.5" width="1" height="20" fill="#f0f0f0"/>
 <text x="165" y="672" font-family="Liberation Sans" font-size="11.5" fill="#7a7a7a">2,007m</text>
 <text x="232.5" y="672" font-family="Liberation Sans" font-size="12" fill="#000">Y:</text>
 <rect x="243" y="657.5" width="57" height="20" fill="#e0e0e0"/>
 <rect x="243" y="657.5" width="57" height="2" fill="#111"/><rect x="243" y="657.5" width="2" height="20" fill="#111"/>
 <rect x="243" y="676.5" width="57" height="1" fill="#f0f0f0"/><rect x="299" y="657.5" width="1" height="20" fill="#f0f0f0"/>
 <text x="247" y="672" font-family="Liberation Sans" font-size="11.5" fill="#7a7a7a">-3,7m</text>
 <text x="315" y="672" font-family="Liberation Sans" font-size="12" fill="#000">Z:</text>
 <rect x="325" y="657.5" width="40" height="20" fill="#e0e0e0"/>
 <rect x="325" y="657.5" width="40" height="2" fill="#111"/><rect x="325" y="657.5" width="2" height="20" fill="#111"/>
 <rect x="325" y="676.5" width="40" height="1" fill="#f0f0f0"/>
 <text x="329" y="672" font-family="Liberation Sans" font-size="11.5" fill="#7a7a7a">0,0m</text>
 <!-- prompt line -->
 <rect x="46" y="682" width="312" height="1" fill="#8a8a8a"/><rect x="46" y="682" width="1" height="20" fill="#8a8a8a"/>
 <rect x="47" y="683" width="311" height="1" fill="#e4e4e4"/>
 <text x="52" y="697" font-family="Liberation Sans" font-size="12" fill="#000" textLength="45">Select All</text>
 <!-- key button -->
 <rect x="358" y="656" width="44" height="44" fill="#c8c8c8"/>
 <rect x="358" y="656" width="44" height="1" fill="#f0f0f0"/><rect x="358" y="656" width="1" height="44" fill="#f0f0f0"/>
 <rect x="401" y="656" width="1" height="44" fill="#6a6a6a"/><rect x="358" y="699" width="44" height="1" fill="#6a6a6a"/>
 <rect x="404" y="655" width="1" height="46" fill="#8a8a8a"/><rect x="405" y="655" width="1" height="46" fill="#f0f0f0"/>
 <circle cx="372.5" cy="677.5" r="3.8" fill="none" stroke="#000" stroke-width="2.2"/>
 <rect x="376" y="676" width="15" height="3" fill="#000"/>
 <rect x="384" y="678" width="2" height="4" fill="#000"/><rect x="388" y="678" width="2" height="3" fill="#000"/>
 <!-- auto key / set key -->
 <rect x="406" y="656.5" width="46" height="21" fill="#c8c8c8"/>
 <rect x="406" y="656.5" width="46" height="1" fill="#f0f0f0"/><rect x="406" y="656.5" width="1" height="21" fill="#f0f0f0"/>
 <rect x="451" y="656.5" width="1" height="21" fill="#7a7a7a"/><rect x="406" y="676.5" width="46" height="1" fill="#7a7a7a"/>
 <text x="408" y="672" font-family="Liberation Sans" font-size="12" fill="#000" textLength="43">Auto Key</text>
 <rect x="406" y="679" width="46" height="21" fill="#c8c8c8"/>
 <rect x="406" y="679" width="46" height="1" fill="#f0f0f0"/><rect x="406" y="679" width="1" height="21" fill="#f0f0f0"/>
 <rect x="451" y="679" width="1" height="21" fill="#7a7a7a"/><rect x="406" y="699" width="46" height="1" fill="#7a7a7a"/>
 <text x="411" y="694.5" font-family="Liberation Sans" font-size="12" fill="#000" textLength="37">Set Key</text>
 <!-- selected dropdown -->
 <rect x="456.5" y="656.5" width="114" height="21" fill="#e2e2e2"/>
 <rect x="456.5" y="656.5" width="114" height="1.5" fill="#5a5a5a"/><rect x="456.5" y="656.5" width="1.5" height="21" fill="#5a5a5a"/>
 <rect x="456.5" y="676.5" width="114" height="1" fill="#f4f4f4"/>
 <rect x="553" y="659" width="16" height="17" fill="#f4f4f4"/>
 <rect x="568" y="659" width="1" height="17" fill="#6a6a6a"/><rect x="553" y="675" width="16" height="1" fill="#6a6a6a"/>
 <path d="M557 665 L565 665 L561 669Z" fill="#000"/>
 <text x="460.5" y="671.5" font-family="Liberation Sans" font-size="12" fill="#000">Selected</text>
 <!-- curve icon -->
 <path d="M461 695 L466 684 L470 692 L475 683" fill="none" stroke="#d02020" stroke-width="1.4"/>
 <path d="M462 683.5 L476 683.5 M462 696 L476 696" stroke="#5a6ad0" stroke-width="1" stroke-dasharray="1.5 1"/>
 <path d="M479 695 L479 699 L475 699Z" fill="#111"/>
 <rect x="482" y="679" width="89" height="21" fill="#c8c8c8"/>
 <rect x="482" y="679" width="89" height="1" fill="#f0f0f0"/><rect x="482" y="679" width="1" height="21" fill="#f0f0f0"/>
 <rect x="570" y="679" width="1" height="21" fill="#7a7a7a"/><rect x="482" y="699" width="89" height="1" fill="#7a7a7a"/>
 <text x="499" y="694.5" font-family="Liberation Sans" font-size="12" fill="#000" textLength="56">Key Filters...</text>
 <!-- playback -->
 <g fill="#000">
  <rect x="580" y="662" width="2" height="8"/><path d="M582 666 L589 662 L589 670Z M589 666 L596 662 L596 670Z"/>
  <path d="M608 666 L614 662 L614 670Z"/><rect x="615" y="662" width="2" height="8"/><rect x="618" y="662" width="2" height="8"/>
  <rect x="652" y="662" width="2" height="8"/><rect x="655" y="662" width="2" height="8"/><path d="M658 662 L665 666 L658 670Z"/>
  <path d="M679 662 L686 666 L679 670Z M686 662 L693 666 L686 670Z"/><rect x="693" y="662" width="2" height="8"/>
 </g>
 <rect x="601" y="659" width="1" height="15" fill="#808080"/><rect x="602" y="659" width="1" height="15" fill="#eeeeee"/>
 <rect x="629.5" y="659.5" width="16" height="14" fill="#d0d0d0" stroke="#000" stroke-width="1.8"/>
 <path d="M634 662.5 L642 666.5 L634 670.5Z" fill="#000"/>
 <path d="M650 673 L650 677 L646 677Z" fill="#111"/>
 <rect x="673" y="659" width="1" height="15" fill="#808080"/><rect x="674" y="659" width="1" height="15" fill="#eeeeee"/>
 <rect x="702" y="659" width="1" height="15" fill="#808080"/><rect x="703" y="659" width="1" height="15" fill="#eeeeee"/>
 <!-- row2 -->
 <g fill="#000">
  <rect x="584" y="685" width="1.5" height="8"/><path d="M586 689 L589 685.5 L589 692.5Z M592 689 L589 685.5 L589 692.5Z"/><rect x="592.5" y="685" width="1.5" height="8"/>
 </g>
 <rect x="601" y="682" width="1" height="15" fill="#808080"/><rect x="602" y="682" width="1" height="15" fill="#eeeeee"/>
 <rect x="604" y="680" width="63" height="19" fill="#e0e0e0"/>
 <rect x="604" y="680" width="63" height="2" fill="#111"/><rect x="604" y="680" width="2" height="19" fill="#111"/>
 <rect x="604" y="698" width="63" height="1" fill="#f0f0f0"/>
 <text x="608" y="694" font-family="Liberation Sans" font-size="12" fill="#000">0</text>
 <rect x="668" y="681" width="9" height="17" fill="#c8c8c8"/>
 <path d="M670 687 L675 687 L672.5 684Z M670 692 L675 692 L672.5 695Z" fill="#000"/>
 <rect x="683.5" y="682.5" width="11" height="11" fill="#f0f0f0" stroke="#333" stroke-width="1"/>
 <rect x="683.5" y="682.5" width="11" height="2.5" fill="#333"/>
 <circle cx="694" cy="692" r="4" fill="#f0f0f0" stroke="#c02020" stroke-width="1.3"/>
 <path d="M694 689.5 L694 692 L696 692" stroke="#c02020" stroke-width="1"/>
 <rect x="702" y="682" width="1" height="15" fill="#808080"/><rect x="703" y="682" width="1" height="15" fill="#eeeeee"/>
 <!-- nav icons -->
 <circle cx="713.5" cy="665.5" r="4.3" fill="#dfe6f8" stroke="#101040" stroke-width="1.4"/>
 <path d="M716.5 668.5 L721.5 673.5" stroke="#1a2a9a" stroke-width="2.4"/>
 <g fill="none" stroke="#a02828" stroke-width="1.2">
  <rect x="733.5" y="659.5" width="12" height="10"/><path d="M739.5 659.5 L739.5 669.5 M733.5 664.5 L745.5 664.5"/>
 </g>
 <circle cx="734" cy="667.5" r="3.4" fill="#dfe6f8" stroke="#101040" stroke-width="1.2"/>
 <path d="M736.5 670 L740 673.5" stroke="#1a2a9a" stroke-width="2"/>
 <path d="M753.5 662 L753.5 659.5 L756 659.5 M766 659.5 L768.5 659.5 L768.5 662 M753.5 671 L753.5 673.5 L756 673.5 M766 673.5 L768.5 673.5 L768.5 671" fill="none" stroke="#000" stroke-width="1.2"/>
 <path d="M755.5 663.5 L758 661 L766 661 L763.5 663.5Z" fill="#f4f4f4" stroke="#1a2a8a" stroke-width="1"/>
 <path d="M763.5 663.5 L766 661 L766 669 L763.5 671.5Z" fill="#808080" stroke="#1a2a8a" stroke-width="1"/>
 <rect x="755.5" y="663.5" width="8" height="8" fill="#c8ccd8" stroke="#1a2a8a" stroke-width="1.1"/>
 <path d="M772 673 L772 677 L768 677Z" fill="#111"/>
 <g fill="none" stroke="#a02828" stroke-width="1.2">
  <rect x="779.5" y="659.5" width="12" height="10"/><path d="M785.5 659.5 L785.5 669.5 M779.5 664.5 L791.5 664.5"/>
 </g>
 <path d="M776.5 667 L779 664.5 L786 664.5 L783.5 667Z" fill="#f4f4f4" stroke="#1a2a8a" stroke-width="1"/>
 <path d="M783.5 667 L786 664.5 L786 671.5 L783.5 674Z" fill="#d0d0d0" stroke="#1a2a8a" stroke-width="1"/>
 <rect x="776.5" y="667" width="7" height="7" fill="#c8ccd8" stroke="#1a2a8a" stroke-width="1.1"/>
 <path d="M795 673 L795 677 L791 677Z" fill="#111"/>
 <rect x="707.5" y="681.5" width="15" height="14" fill="#d8d8d8" stroke="#000" stroke-width="1" stroke-dasharray="2 1"/>
 <circle cx="713.5" cy="687.5" r="3.6" fill="#dfe6f8" stroke="#101040" stroke-width="1.2"/>
 <path d="M716 690 L720 694" stroke="#1a2a9a" stroke-width="2"/>
 <path d="M732.5 692 Q731 689 731.5 687.5 L733 686.5 L734.5 688.5 L734.5 683.5 L736.5 683.5 L737 688 L737.5 682 L739.5 682 L740 688 L740.5 683 L742.5 683.5 L742.5 689 L744 686.5 L745.5 687.5 L744 694 Q741.5 697 737.5 697 Q734 697 732.5 692Z" fill="#e8e8e8" stroke="#000" stroke-width="1"/>
 <path d="M752.5 690 A7 7 0 0 1 765 684" fill="none" stroke="#1a2a8a" stroke-width="1.1"/>
 <path d="M755 695 A7 7 0 0 0 766.5 692" fill="none" stroke="#1a2a8a" stroke-width="1.1"/>
 <path d="M759 690 L759 683 M759 690 L767 690 M759 690 L753 695.5" stroke="#000" stroke-width="1.2"/>
 <path d="M757 684 L759 680.5 L761 684Z M766 688 L769.5 690 L766 692Z M752 693 L751.5 697 L755 696Z" fill="#000"/>
 <path d="M772 696 L772 700 L768 700Z" fill="#111"/>
 <rect x="777.5" y="681.5" width="11" height="10" fill="#d0d0d8" stroke="#1a2a8a" stroke-width="1.3"/>
 <path d="M783.5 691.5 L783.5 695.5 L791.5 695.5 L791.5 687.5 L788.5 687.5" fill="none" stroke="#000" stroke-width="1.3"/>
 <path d="M780.5 684.5 L787 691" stroke="#000" stroke-width="1" stroke-dasharray="1.5 1"/>
 <path d="M780 684 L783.5 684 L780 687.5Z" fill="#000"/>
 <!-- window bottom -->
 <rect x="0" y="700" width="801" height="3" fill="#d8d4d4"/><rect x="0" y="703" width="801" height="1" fill="#2e4048"/>
</svg>

<!-- MENU -->
<div class="a menu">
  <div class="a" style="left:28px;top:0;width:1px;height:486px;background:#e2e3e3"></div>
  <div class="a" style="left:29px;top:0;width:1px;height:486px;background:#fff"></div>
  <div class="row" style="top:2px"><span class="t">Undo Select All</span><span class="k">Ctrl+Z</span></div>
  <div class="row dis" style="top:24px"><span class="t">Redo</span><span class="k">Ctrl+Y</span></div>
  <div class="sep" style="top:50px"></div>
  <div class="row" style="top:54px"><span class="t">Hold</span><span class="k">Ctrl+H</span></div>
  <div class="row dis" style="top:76px"><span class="t">Fetch</span><span class="k">Alt+Ctrl+F</span></div>
  <div class="sep" style="top:102px"></div>
  <div class="row" style="top:106px"><span class="t">Delete</span><span class="k">Delete</span></div>
  <div class="row" style="top:128px"><span class="t">Clone</span><span class="k">Ctrl+V</span></div>
  <div class="sep" style="top:154px"></div>
  <div class="row" style="top:158px"><span class="t">Move</span><span class="k">W</span></div>
  <div class="row" style="top:180px"><span class="t">Rotate</span><span class="k">E</span></div>
  <div class="row" style="top:202px"><span class="t">Scale</span></div>
  <div class="row" style="top:224px"><span class="t">Transform Type-In...</span><span class="k">F12</span></div>
  <div class="sep" style="top:250px"></div>
  <div class="a" style="left:2px;top:254px;width:267px;height:22px;border:1px solid #b0d6ee;border-radius:3px;background:linear-gradient(rgba(240,247,252,.85),rgba(222,236,248,.85))"></div>
  <div class="row" style="top:254px"><span class="t">Select All</span><span class="k">Ctrl+A</span></div>
  <div class="row" style="top:276px"><span class="t">Select None</span><span class="k">Ctrl+D</span></div>
  <div class="row" style="top:298px"><span class="t">Select Invert</span><span class="k">Ctrl+I</span></div>
  <div class="sep" style="top:324px"></div>
  <div class="row" style="top:328px"><span class="t">Select Similar</span><span class="k">Ctrl+Q</span></div>
  <div class="row dis" style="top:350px"><span class="t">Select Instances</span></div>
  <div class="row" style="top:372px"><span class="t">Select By</span><svg style="left:256px;top:7px" width="6" height="8"><path d="M1 0 L5 4 L1 8Z" fill="#000"/></svg></div>
  <div class="sep" style="top:398px"></div>
  <div class="row" style="top:402px"><span class="t">Selection Region</span><svg style="left:256px;top:7px" width="6" height="8"><path d="M1 0 L5 4 L1 8Z" fill="#000"/></svg></div>
  <div class="sep" style="top:428px"></div>
  <div class="row" style="top:432px"><span class="t">Manage Selection Sets...</span></div>
  <div class="sep" style="top:458px"></div>
  <div class="row" style="top:462px"><span class="t">Object Properties...</span></div>
</div>

<div class="a" style="left:800px;top:0;width:1px;height:704px;background:#2e4650"></div>
</body></html>
